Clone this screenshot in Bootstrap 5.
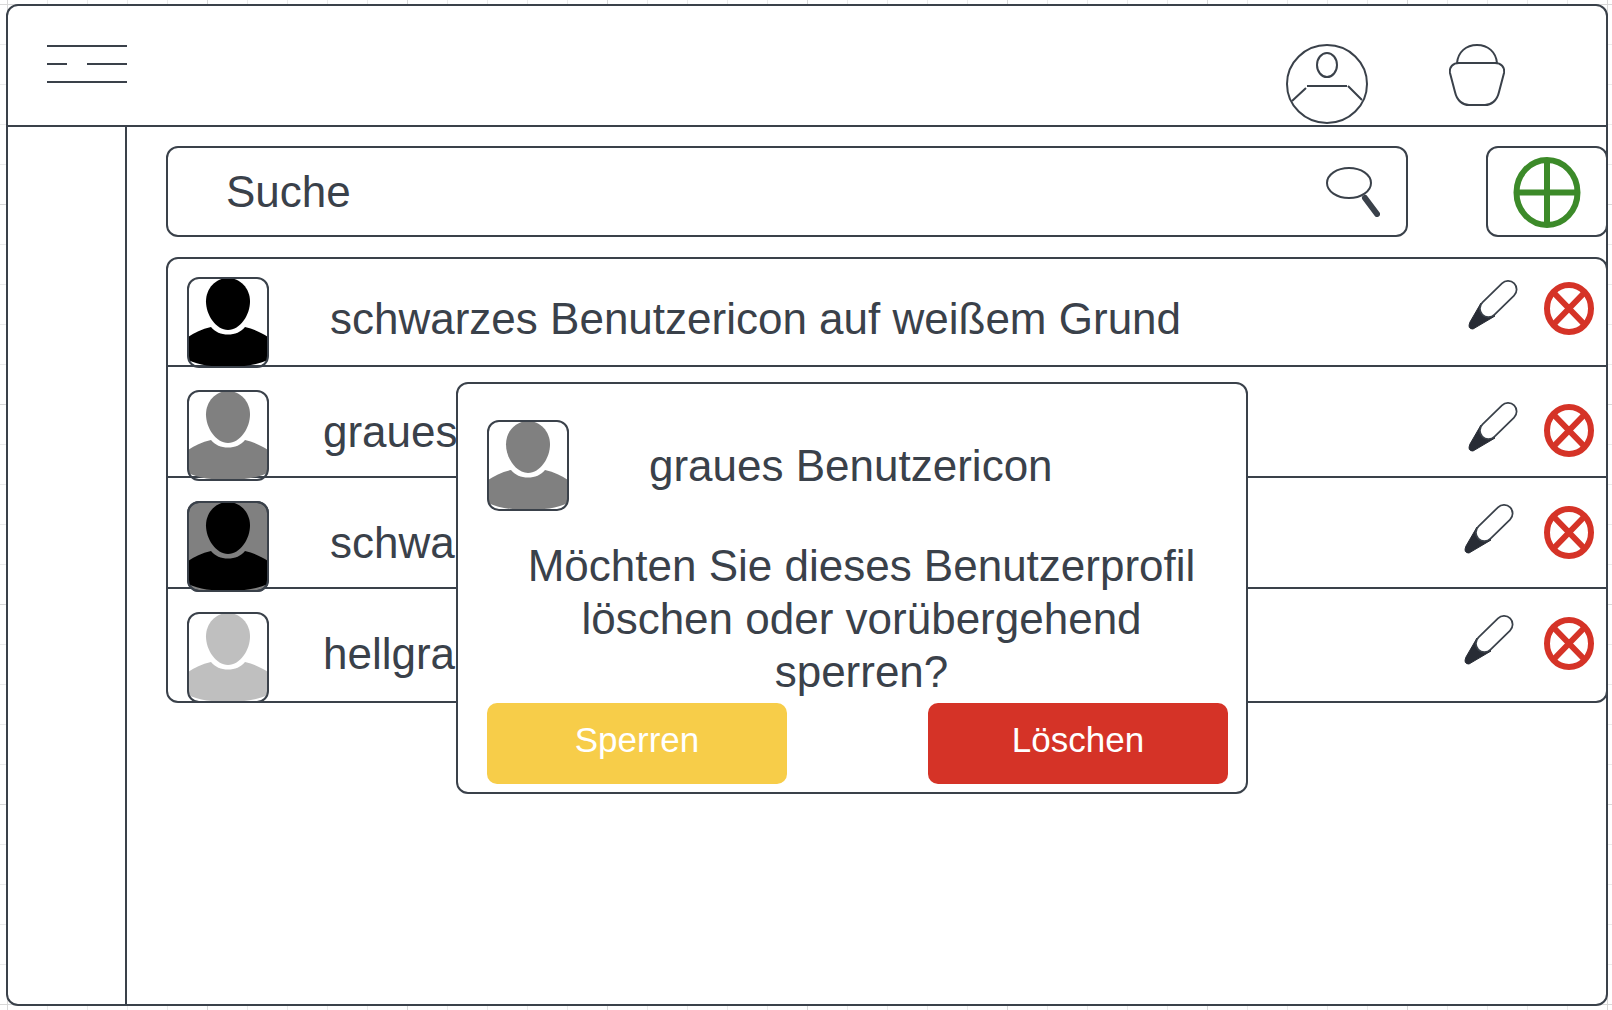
<!DOCTYPE html>
<html lang="de">
<head>
<meta charset="utf-8">
<meta name="viewport" content="width=device-width, initial-scale=1">
<title>Benutzerverwaltung</title>
<link href="https://cdn.jsdelivr.net/npm/bootstrap@5.3.0/dist/css/bootstrap.min.css" rel="stylesheet">
<style>
:root { --ink: #3a414a; --warn: #f7cd49; --stop: #d53327; --go: #3c8a29; }
body {
  font-family: "Liberation Sans", Arial, sans-serif;
  font-size: 44px; line-height: 53px; color: var(--ink);
  background-color: #fff;
  background-image:
    linear-gradient(to right, #d8d8d8 1px, transparent 1px),
    linear-gradient(to bottom, #d8d8d8 1px, transparent 1px),
    linear-gradient(to right, #ebebeb 1px, transparent 1px),
    linear-gradient(to bottom, #ebebeb 1px, transparent 1px);
  background-size: 200px 200px, 200px 200px, 40px 40px, 40px 40px;
  background-position: 7px 4px;
}
svg { display: block; fill: none; stroke: var(--ink); stroke-width: 2; }
.outlined { border: 2px solid var(--ink); border-radius: 12px; }
.app-frame { margin: 4px 4px 4px 6px; min-height: calc(100vh - 8px); }
.app-head { height: 121px; padding: 38px 101px 0 39px; border-bottom: 2px solid var(--ink); }
.head-tools { gap: 81px; }
.app-side { width: 119px; border-right: 2px solid var(--ink); }
.app-main { padding: 19px 0 19px 39px; margin-right: -2px; }
.plain-btn { padding: 0; border: 0; background: none; flex: none; }
.tool-row { gap: 78px; margin-bottom: 20px; }
.search-box { height: 91px; padding: 0 26px 0 58px; }
.search-box input { border: 0; padding: 0; outline: 0; color: var(--ink); background: none; min-width: 0; }
.search-box input::placeholder { color: var(--ink); opacity: 1; }
.add-btn { width: 122px; height: 91px; background: #fff; padding: 0; }
.add-btn svg { stroke: var(--go); stroke-width: 6; }
.user-item { height: 111px; padding: 23px 12px 0 19px; border-bottom: 2px solid var(--ink); }
.user-item:first-child { height: 108px; padding-top: 18px; }
.user-item:last-child { height: 112px; border-bottom: 0; }
.user-name { padding-top: 15px; }
.indent-wide { margin-left: 61px; }
.indent-slim { margin-left: 54px; }
.row-tools { gap: 26px; padding-top: 3px; }
.row-tools.lowered { padding-top: 12px; }
.row-tools.spread { gap: 30px; }
.confirm-box { top: 255px; left: 329px; width: 792px; padding: 36px 18px 8px 29px; background: #fff; }
.confirm-name { margin: 19px 0 0 80px; font-size: 44px; line-height: 53px; font-weight: 400; }
.confirm-text { margin: 28px 0 5px; padding: 0 8px 0 16px; }
.confirm-btn { width: 300px; height: 81px; padding: 0 0 6px; border: 0; border-radius: 10px; font-size: 35px; color: #fff; }
.confirm-btn:hover { color: #fff; }
.btn-lock, .btn-lock:hover { background: var(--warn); }
.btn-drop, .btn-drop:hover { background: var(--stop); }
</style>
<script src="https://cdn.jsdelivr.net/npm/bootstrap@5.3.0/dist/js/bootstrap.bundle.min.js"></script>
</head>
<body>
<svg width="0" height="0" class="position-absolute" aria-hidden="true">
  <defs>
    <g id="person" stroke="none">
      <path d="M41 1C53 1 63 11 63 24.500C63 38 53 53 41 53C29 53 19 38 19 24.500C19 11 29 1 41 1Z"/>
      <path d="M24 50C28 55 34 57.500 41 57.500C48 57.500 54 55 58 50C67 52 75 56 81 60V83C70 88 56 90 41 90C26 90 12 88 1 83V60C7 56 15 52 24 50Z"/>
    </g>
    <rect id="photo-edge" x="1" y="1" width="80" height="89" rx="11"/>
    <g id="pencil">
      <path d="M13 23L2 42Q-1 49 5 49L27 36Z" fill="#282c35" stroke="#282c35" stroke-width="1"/>
      <path d="M40 9.500L20.500 28.500" stroke-width="19" stroke-linecap="round"/>
      <path d="M40 9.500L20.500 28.500" stroke="#fff" stroke-width="15.500" stroke-linecap="round"/>
    </g>
    <g id="cross" stroke="#d53327" stroke-width="6">
      <ellipse cx="25" cy="26.500" rx="22" ry="23.500"/>
      <path d="M9.500 10.500L40.500 42.500M40.500 10.500L9.500 42.500"/>
    </g>
  </defs>
</svg>

<div class="app-frame outlined bg-white d-flex flex-column">
  <header class="app-head d-flex justify-content-between align-items-start">
    <button class="plain-btn" type="button" aria-label="Menü">
      <svg width="80" height="40"><path d="M0 2H80M0 20H20M40 20H80M0 38H80"/></svg>
    </button>
    <div class="head-tools d-flex align-items-start">
      <button class="plain-btn" type="button" aria-label="Profil">
        <svg width="82" height="80"><ellipse cx="41" cy="40" rx="40" ry="39"/><ellipse cx="41" cy="21" rx="10" ry="12"/><path d="M21 42H61M20 44L6 57M62 42L76 56"/></svg>
      </button>
      <button class="plain-btn" type="button" aria-label="Warenkorb">
        <svg width="56" height="62"><path d="M8 19C9 8 17 1 28 1S47 8 48 19M10 19H46C52 19 56 23 55 29L50 48C48 57 42 61 36 61H20C14 61 8 57 6 48L1 29C0 23 4 19 10 19Z"/></svg>
      </button>
    </div>
  </header>

  <div class="d-flex flex-grow-1">
    <nav class="app-side flex-shrink-0" aria-label="Seitenleiste"></nav>
    <main class="app-main flex-grow-1 position-relative">
      <div class="tool-row d-flex">
        <form class="search-box outlined d-flex align-items-center flex-grow-1" role="search">
          <input class="flex-grow-1" type="text" placeholder="Suche" aria-label="Suche">
          <button class="plain-btn" type="button" aria-label="Suchen">
            <svg width="54" height="50"><ellipse cx="23" cy="16" rx="22" ry="15"/><path d="M39 31L51 47" stroke-width="6" stroke-linecap="round"/></svg>
          </button>
        </form>
        <button class="add-btn outlined flex-shrink-0 d-flex align-items-center justify-content-center" type="button" aria-label="Benutzer hinzufügen">
          <svg width="68" height="73"><ellipse cx="34" cy="37.500" rx="30.500" ry="32.500"/><path d="M34 5V70M3 37.500H65"/></svg>
        </button>
      </div>

      <ul class="outlined list-unstyled mb-0">
        <li class="user-item d-flex align-items-start">
          <svg class="flex-shrink-0" width="82" height="91"><use href="#person" fill="#000"/><use href="#photo-edge"/></svg>
          <span class="user-name indent-wide flex-grow-1 text-nowrap">schwarzes Benutzericon auf weißem Grund</span>
          <div class="row-tools d-flex align-items-start">
            <button class="plain-btn" type="button" aria-label="Bearbeiten"><svg width="50" height="50"><use href="#pencil"/></svg></button>
            <button class="plain-btn" type="button" aria-label="Löschen"><svg width="50" height="55" viewBox="0 -2 50 55"><use href="#cross"/></svg></button>
          </div>
        </li>
        <li class="user-item d-flex align-items-start">
          <svg class="flex-shrink-0" width="82" height="91"><use href="#person" fill="#808080"/><use href="#photo-edge"/></svg>
          <span class="user-name indent-slim flex-grow-1 text-nowrap">graues Benutzericon</span>
          <div class="row-tools lowered d-flex align-items-start">
            <button class="plain-btn" type="button" aria-label="Bearbeiten"><svg width="50" height="50"><use href="#pencil"/></svg></button>
            <button class="plain-btn" type="button" aria-label="Löschen"><svg width="50" height="55" viewBox="0 -2 50 55"><use href="#cross"/></svg></button>
          </div>
        </li>
        <li class="user-item d-flex align-items-start">
          <svg class="flex-shrink-0" width="82" height="91"><rect x="1" y="1" width="80" height="89" rx="11" fill="#808080"/><use href="#person" fill="#000"/><use href="#photo-edge"/></svg>
          <span class="user-name indent-wide flex-grow-1 text-nowrap">schwarzes Benutzericon auf grauem Grund</span>
          <div class="row-tools spread d-flex align-items-start">
            <button class="plain-btn" type="button" aria-label="Bearbeiten"><svg width="50" height="50"><use href="#pencil"/></svg></button>
            <button class="plain-btn" type="button" aria-label="Löschen"><svg width="50" height="55" viewBox="0 -2 50 55"><use href="#cross"/></svg></button>
          </div>
        </li>
        <li class="user-item d-flex align-items-start">
          <svg class="flex-shrink-0" width="82" height="91"><use href="#person" fill="#bfbfbf"/><use href="#photo-edge"/></svg>
          <span class="user-name indent-slim flex-grow-1 text-nowrap">hellgraues Benutzericon</span>
          <div class="row-tools spread d-flex align-items-start">
            <button class="plain-btn" type="button" aria-label="Bearbeiten"><svg width="50" height="50"><use href="#pencil"/></svg></button>
            <button class="plain-btn" type="button" aria-label="Löschen"><svg width="50" height="55" viewBox="0 -2 50 55"><use href="#cross"/></svg></button>
          </div>
        </li>
      </ul>

      <section class="confirm-box outlined position-absolute" role="dialog" aria-labelledby="confirm-name">
        <div class="d-flex align-items-start">
          <svg class="flex-shrink-0" width="82" height="91"><use href="#person" fill="#808080"/><use href="#photo-edge"/></svg>
          <h2 class="confirm-name" id="confirm-name">graues Benutzericon</h2>
        </div>
        <p class="confirm-text text-center">Möchten Sie dieses Benutzerprofil löschen oder vorübergehend sperren?</p>
        <div class="d-flex justify-content-between">
          <button class="btn confirm-btn btn-lock" type="button">Sperren</button>
          <button class="btn confirm-btn btn-drop" type="button">Löschen</button>
        </div>
      </section>
    </main>
  </div>
</div>
</body>
</html>
